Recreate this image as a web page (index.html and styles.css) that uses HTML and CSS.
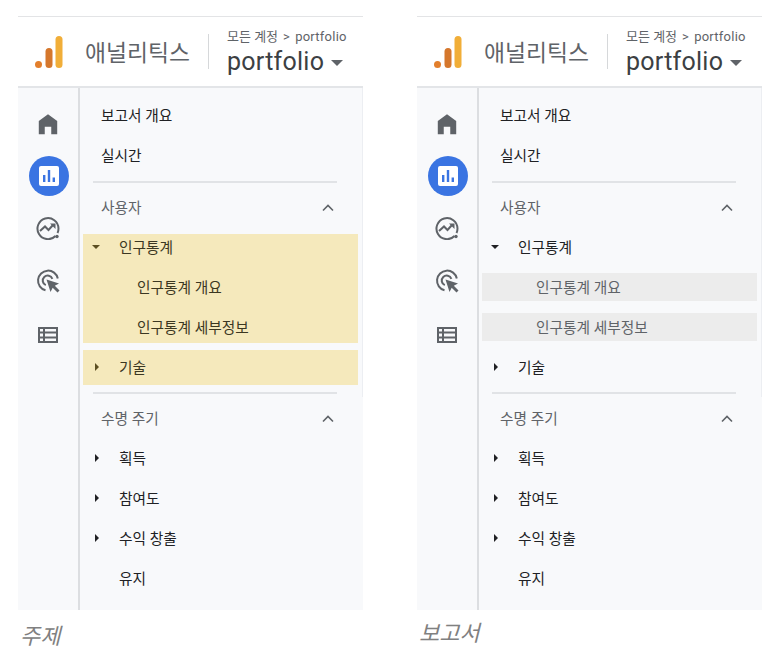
FILE: index.html
```html
<!DOCTYPE html>
<html lang="ko">
<head>
  <meta charset="UTF-8" />
  <title>애널리틱스 보고서 메뉴</title>
  <link rel="stylesheet" href="styles.css">
</head>
<body>
  <svg class="defs" width="0" height="0">
    <symbol id="i-logo" viewBox="0 0 28 32">
      <circle cx="3.5" cy="28.5" r="3.5" fill="#e37f2c"/>
      <rect x="10.500" y="12" width="7" height="20" rx="3.500" fill="#d5772c"/>
      <rect x="20.500" y="0" width="7" height="32" rx="3.500" fill="#f1ae38"/>
    </symbol>
    <symbol id="i-home" viewBox="0 0 24 24">
      <path d="M12 3 3.500 9.300V21.500H9V14.500H15V21.500H20.500V9.300Z" fill="#5f6368"/>
    </symbol>
    <symbol id="i-reports" viewBox="0 0 40 40">
      <circle cx="20" cy="20" r="20" fill="#3a74e2"/>
      <rect x="10" y="10" width="20" height="20" rx="2" fill="#fff"/>
      <path d="M14 19h2.400v7H14zM18.800 14h2.400v12h-2.400zM23.600 21.500H26V26h-2.400z" fill="#3a74e2"/>
    </symbol>
    <symbol id="i-explore" viewBox="0 0 24 24">
      <path d="M19.500 20A10.500 10.500 0 1 1 22.500 12.500Q22.500 15 21.500 17" fill="none" stroke="#5f6368" stroke-width="2"/>
      <path d="M4 15 9 10.500l3.500 3.500 4.500-5" fill="none" stroke="#5f6368" stroke-width="2"/>
      <path d="M14 7.500H19.500V13Z" fill="#5f6368"/>
      <circle cx="21" cy="20.500" r="1.700" fill="#5f6368"/>
    </symbol>
    <symbol id="i-ads" viewBox="0 0 24 24">
      <path d="M9.500 21.300A10 10 0 1 1 21.800 9.500" fill="none" stroke="#5f6368" stroke-width="2"/>
      <path d="M9.800 16.200A5 5 0 1 1 16.400 9.800" fill="none" stroke="#5f6368" stroke-width="2"/>
      <path d="M10.500 10.500 23 14.500 18.800 16.700 23.500 21.500 21.500 23.500 16.700 18.800 14.500 23Z" fill="#5f6368"/>
    </symbol>
    <symbol id="i-table" viewBox="0 0 20 16">
      <path fill-rule="evenodd" d="M0 0H20V16H0ZM2 2V4.500H5V2ZM7 2V4.500H18V2ZM2 6.500V9.500H5V6.500ZM7 6.500V9.500H18V6.500ZM2 11.500V14H5V11.500ZM7 11.500V14H18V11.500Z" fill="#5f6368"/>
    </symbol>
    <symbol id="i-chevron" viewBox="0 0 12 8">
      <path d="M1 6.500 6 1.500l5 5" fill="none" stroke="#5f6368" stroke-width="1.600"/>
    </symbol>
  </svg>

  <div class="compare">
    <!-- 주제 -->
    <figure class="shot">
      <div class="ga">
        <header class="ga-head">
          <svg class="logo"><use href="#i-logo"/></svg>
          <span class="brand">애널리틱스</span>
          <div class="account">
            <div class="crumb"><span class="crumb-ko">모든 계정</span><span class="crumb-sep">&gt;</span>portfolio</div>
            <div class="property">portfolio<i class="caret-big"></i></div>
          </div>
        </header>
        <div class="ga-body">
          <nav class="rail">
            <svg class="rail-home"><use href="#i-home"/></svg>
            <svg class="rail-circle"><use href="#i-reports"/></svg>
            <svg class="rail-icon"><use href="#i-explore"/></svg>
            <svg class="rail-icon"><use href="#i-ads"/></svg>
            <svg class="rail-table"><use href="#i-table"/></svg>
          </nav>
          <div class="menu">
            <div class="menu-top">
              <div class="row lvl0">보고서 개요</div>
              <div class="row lvl0">실시간</div>
              <hr class="sep">
              <div class="row head">사용자<svg class="chev"><use href="#i-chevron"/></svg></div>
              <div class="hl hl-a">
                <div class="row lvl1"><i class="tri-down"></i>인구통계</div>
                <div class="row lvl2">인구통계 개요</div>
                <div class="row lvl2">인구통계 세부정보</div>
              </div>
              <div class="hl hl-b">
                <div class="row lvl1"><i class="tri-right"></i>기술</div>
              </div>
              <hr class="sep sep-b">
            </div>
            <div class="row head">수명 주기<svg class="chev"><use href="#i-chevron"/></svg></div>
            <div class="row lvl1"><i class="tri-right"></i>획득</div>
            <div class="row lvl1"><i class="tri-right"></i>참여도</div>
            <div class="row lvl1"><i class="tri-right"></i>수익 창출</div>
            <div class="row lvl1">유지</div>
          </div>
        </div>
      </div>
      <figcaption class="cap">주제</figcaption>
    </figure>

    <!-- 보고서 -->
    <figure class="shot">
      <div class="ga">
        <header class="ga-head">
          <svg class="logo"><use href="#i-logo"/></svg>
          <span class="brand">애널리틱스</span>
          <div class="account">
            <div class="crumb"><span class="crumb-ko">모든 계정</span><span class="crumb-sep">&gt;</span>portfolio</div>
            <div class="property">portfolio<i class="caret-big"></i></div>
          </div>
        </header>
        <div class="ga-body">
          <nav class="rail">
            <svg class="rail-home"><use href="#i-home"/></svg>
            <svg class="rail-circle"><use href="#i-reports"/></svg>
            <svg class="rail-icon"><use href="#i-explore"/></svg>
            <svg class="rail-icon"><use href="#i-ads"/></svg>
            <svg class="rail-table"><use href="#i-table"/></svg>
          </nav>
          <div class="menu">
            <div class="menu-top">
              <div class="row lvl0">보고서 개요</div>
              <div class="row lvl0">실시간</div>
              <hr class="sep">
              <div class="row head">사용자<svg class="chev"><use href="#i-chevron"/></svg></div>
              <div class="row lvl1"><i class="tri-down"></i>인구통계</div>
              <div class="row grey"><span class="grey-bar">인구통계 개요</span></div>
              <div class="row grey"><span class="grey-bar">인구통계 세부정보</span></div>
              <div class="row lvl1"><i class="tri-right"></i>기술</div>
              <hr class="sep sep-b">
            </div>
            <div class="row head">수명 주기<svg class="chev"><use href="#i-chevron"/></svg></div>
            <div class="row lvl1"><i class="tri-right"></i>획득</div>
            <div class="row lvl1"><i class="tri-right"></i>참여도</div>
            <div class="row lvl1"><i class="tri-right"></i>수익 창출</div>
            <div class="row lvl1">유지</div>
          </div>
        </div>
      </div>
      <figcaption class="cap cap-report">보고서</figcaption>
    </figure>
  </div>
</body>
</html>
```

FILE: styles.css
```css
* {
  box-sizing: border-box;
}

body {
  margin: 0;
  background: #fff;
  font-family: Roboto, "Noto Sans CJK KR", sans-serif;
  color: #202124;
}

.defs {
  display: block;
}

.compare {
  display: flex;
  gap: 54px;
  padding: 16px 0 0 18px;
}

.shot {
  margin: 0;
  width: 345px;
}

.ga-head {
  display: flex;
  align-items: center;
  height: 72px;
  border-top: 1px solid #e3e4e6;
  border-bottom: 2px solid #e3e5e8;
  padding-left: 17px;
}

.logo {
  width: 28px;
  height: 32px;
  flex: none;
}

.brand {
  margin-left: 22px;
  font-size: 22.800px;
  color: #5f6368;
  width: 123px;
  flex: none;
}

.account {
  border-left: 1px solid #d6d8da;
  height: 35px;
  padding-left: 18px;
  display: flex;
  flex-direction: column;
  justify-content: center;
  white-space: nowrap;
}

.crumb {
  font-size: 13px;
  line-height: 16px;
  letter-spacing: 0.25px;
  color: #5f6368;
  margin-top: -1px;
  margin-bottom: 1px;
}

.crumb-ko {
  letter-spacing: 0;
}

.crumb-sep {
  margin: 0 5px;
}

.property {
  font-size: 25px;
  line-height: 32px;
  letter-spacing: 0.25px;
  color: #3c4043;
  margin-bottom: -4px;
}

.caret-big {
  display: inline-block;
  margin-left: 7px;
  vertical-align: 4px;
  border-left: 6px solid transparent;
  border-right: 6px solid transparent;
  border-top: 6px solid #5f6368;
}

.ga-body {
  display: flex;
  height: 522px;
  background: #f8f9fb;
}

.rail {
  width: 62px;
  flex: none;
  border-right: 2px solid #dcdee1;
  display: flex;
  flex-direction: column;
  align-items: center;
  padding-top: 23px;
}

.rail-home {
  width: 26px;
  height: 26px;
  margin-bottom: 19px;
}

.rail-circle {
  width: 40px;
  height: 40px;
  margin: 0 0 20px 2px;
}

.rail-icon {
  width: 24px;
  height: 24px;
  margin-bottom: 29px;
}

.rail-table {
  width: 20px;
  height: 16px;
  margin-top: 5px;
}

.menu {
  flex: 1;
}

.menu-top {
  padding-top: 7px;
  height: 309px;
  border-right: 1px solid #eceef2;
}

.row {
  position: relative;
  display: flex;
  align-items: center;
  height: 40px;
  padding-bottom: 2px;
  font-size: 14.700px;
  white-space: nowrap;
}

.lvl0,
.head {
  padding-left: 21px;
}

.head {
  color: #5f6368;
}

.lvl1 {
  padding-left: 39px;
}

.lvl2 {
  padding-left: 57px;
}

.chev {
  position: absolute;
  left: 242px;
  top: 17px;
  width: 12px;
  height: 8px;
}

.sep {
  margin: 6px 25px 4px 13px;
  border: none;
  height: 2px;
  background: #e1e3e6;
}

.sep-b {
  margin: 5px 25px 0 13px;
}

.hl + .sep-b {
  margin-top: 7px;
}

.menu-top + .row {
  margin-top: 1px;
}

.tri-down,
.tri-right {
  position: absolute;
  width: 0;
  height: 0;
}

.tri-down {
  left: 12px;
  top: 18px;
  border-left: 4.500px solid transparent;
  border-right: 4.500px solid transparent;
  border-top: 4.500px solid #202124;
}

.tri-right {
  left: 14.500px;
  top: 16px;
  border-top: 4.500px solid transparent;
  border-bottom: 4.500px solid transparent;
  border-left: 4.500px solid #202124;
}

.hl {
  display: flow-root;
  margin-left: 3px;
  margin-right: 4px;
  background: #f5e9bc;
}

.hl .row {
  margin-left: -3px;
  color: #3b3722;
}

.hl-a {
  margin-top: 7px;
  margin-bottom: 7px;
}

.hl-a .row:first-child {
  margin-top: -7px;
}

.hl-a .row:last-child {
  margin-bottom: -4px;
}

.hl-b .row {
  margin-top: -3px;
  margin-bottom: -2px;
}

.hl .tri-down {
  border-top-color: #5c4f22;
}

.hl .tri-right {
  border-left-color: #5c4f22;
}

.grey {
  padding: 0 4px 0 3px;
  color: #5f6368;
}

.grey-bar {
  flex: 1;
  height: 28px;
  line-height: 30px;
  padding-left: 54px;
  background: #ececec;
}

.cap {
  margin: 13px 0 0 2px;
  font-size: 22px;
  line-height: 28px;
  font-style: italic;
  color: #808080;
}

.cap-report {
  margin: 10px 0 0 2px;
}
```
